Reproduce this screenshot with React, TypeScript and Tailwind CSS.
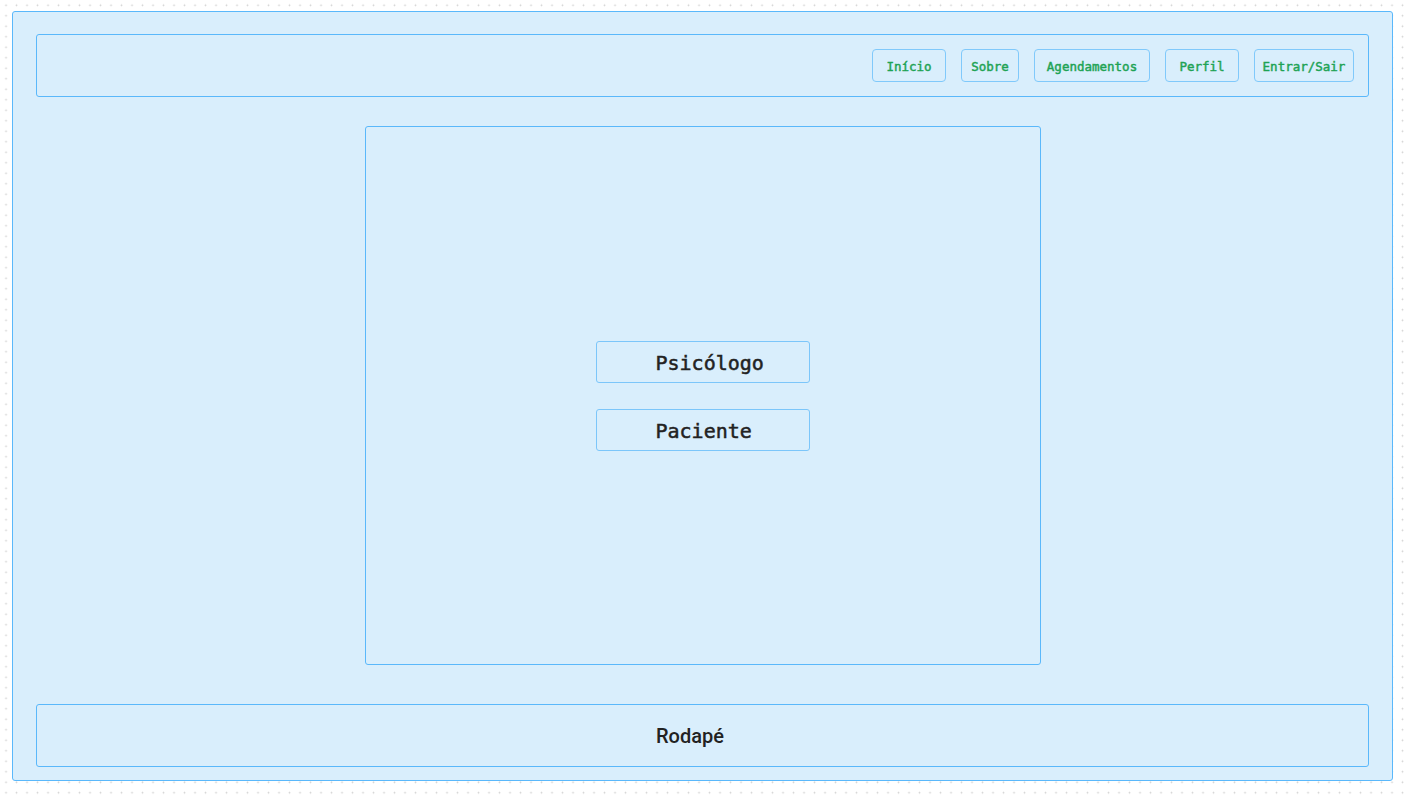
import React from 'react';

const navItems = [
  { label: 'Início', width: 'w-[74px]' },
  { label: 'Sobre', width: 'w-[58px]' },
  { label: 'Agendamentos', width: 'w-[116px]' },
  { label: 'Perfil', width: 'w-[74px]' },
  { label: 'Entrar/Sair', width: 'w-[100px]' },
];

const mono = "font-['DejaVu_Sans_Mono','Liberation_Mono',monospace]";

const NavButton = ({ label, width }: { label: string; width: string }) => (
  <button
    className={`${width} h-[33px] rounded-[4px] border border-[#80c9fb] pt-[3px] text-[12.5px] font-normal [-webkit-text-stroke:0.45px_#1ea354] text-[#1ea354] ${mono} flex items-center justify-center`}
  >
    {label}
  </button>
);

const RoleButton = ({ label }: { label: string }) => (
  <button
    className={`w-[214px] h-[42px] rounded-[3px] border border-[#7cc6fa] pl-[59px] pt-[2px] text-left text-[20px] font-normal [-webkit-text-stroke:0.5px_#222] text-[#222] ${mono}`}
  >
    {label}
  </button>
);

export default function App() {
  return (
    <div className="w-[1410px] h-[796px] bg-white bg-[radial-gradient(circle,#cfcfcf_0.7px,transparent_1.1px)] bg-[size:10.5px_10.5px] bg-[position:0.8px_0px] pt-[11px] pl-[12px]">
      <div className="w-[1381px] h-[770px] rounded-[3px] border border-[#5ab8fb] bg-[#d9eefc] pt-[22px] px-[23px] flex flex-col">
        <header className="h-[63px] rounded-[3px] border border-[#5ab8fb] flex items-center justify-end gap-[15px] pr-[14px]">
          {navItems.map((item) => (
            <NavButton key={item.label} label={item.label} width={item.width} />
          ))}
        </header>

        <main className="mt-[29px] self-center w-[676px] h-[539px] rounded-[3px] border border-[#5ab8fb] flex flex-col items-center justify-center gap-[26px]">
          <RoleButton label="Psicólogo" />
          <RoleButton label="Paciente" />
        </main>

        <footer className="mt-[39px] h-[63px] rounded-[3px] border border-[#5ab8fb] flex items-center pl-[619px]">
          <span className="font-['Roboto','Liberation_Sans',sans-serif] text-[20px] font-medium text-[#222]">
            Rodapé
          </span>
        </footer>
      </div>
    </div>
  );
}
